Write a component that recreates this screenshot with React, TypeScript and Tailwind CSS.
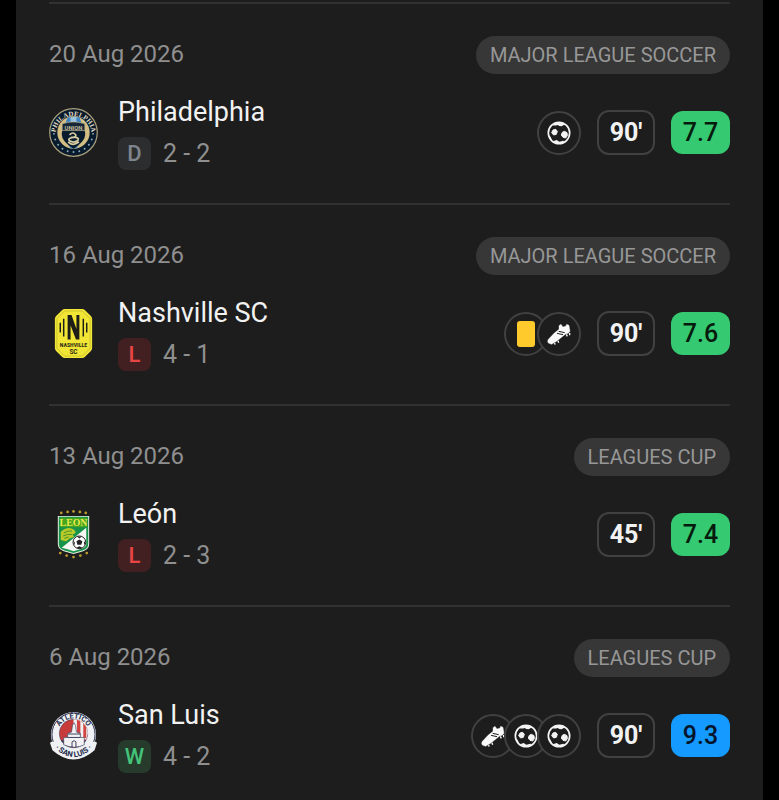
import type { ReactNode } from "react";

type Result = "W" | "D" | "L";
type EventKind = "goal" | "assist" | "yellow";

type Match = {
  date: string;
  league: string;
  team: string;
  crest: ReactNode;
  result: Result;
  score: string;
  events: EventKind[];
  minutes: string;
  rating: string;
  ratingClass: string;
};

const crestClass = "size-[49px] shrink-0";

function PhiladelphiaCrest() {
  const stars = Array.from({ length: 11 }, (_, i) => {
    const a = ((4 + i * 17.2) * Math.PI) / 180;
    return { x: 50 + 40 * Math.cos(a), y: 50 + 40 * Math.sin(a) };
  });
  return (
    <svg viewBox="0 0 100 100" className={crestClass} role="img" aria-label="Philadelphia crest">
      <defs>
        <path id="phi-arc" d="M13.5 53A36.5 36.5 0 0 1 86.5 53" />
      </defs>
      <circle cx="50" cy="50" r="48.5" fill="#071b2c" stroke="#a99f7c" strokeWidth="2.5" />
      <circle cx="50" cy="50" r="33" fill="#d2bd83" />
      <path d="M38 19h24l7 19H31zM33 66h34L56 82H44z" fill="#4084c4" />
      <path d="M44 18h12v14H44z" fill="#9cc3dd" />
      <path d="M27 33q23-9 46 0v14q6 18-23 36Q21 65 27 47z" fill="#071b2c" />
      <path d="M27 32q23-7 46 0v14H27z" fill="#152637" stroke="#b9b08c" strokeWidth="1.5" />
      <path d="M43 54q6-6 11 0 3 5-5 6-12 2-7 7 8 5 16 0 5-5-3-7H46M40 70q9 8 20 0" fill="none" stroke="#d8cda4" strokeWidth="3.5" strokeLinecap="round" />
      <text x="50" y="44" textAnchor="middle" fontFamily="Roboto, sans-serif" fontWeight="700" fontSize="12" fill="#c3bb9c">UNION</text>
      <text fontFamily="'Liberation Serif', serif" fontWeight="700" fontSize="14" fill="#e2ddc8">
        <textPath href="#phi-arc" startOffset="50%" textAnchor="middle">PHILADELPHIA</textPath>
      </text>
      {stars.map((s, i) => (
        <circle key={i} cx={s.x} cy={s.y} r="2" fill="#8ba7b8" />
      ))}
    </svg>
  );
}

function NashvilleCrest() {
  return (
    <svg viewBox="0 0 100 100" className={crestClass} role="img" aria-label="Nashville SC crest">
      <path d="M32 0h36q3 0 5 2l12 12q3 3 3 6v60q0 3-3 6L73 98q-2 2-5 2H32q-3 0-5-2L15 86q-3-3-3-6V20q0-3 3-6L27 2q2-2 5-2z" fill="#f1e536" />
      <path d="M32 4h36l16 16v60L68 96H32L16 80V20z" fill="none" stroke="#c2b92c" strokeWidth="1.5" />
      <path d="M38 12h8l10 29V12h6v50h-7L44 33v29h-6z" fill="#1e1e18" />
      <path d="M23 28v20M30 20v36M70 20v36M77 28v20" stroke="#1e1e18" strokeWidth="3" />
      <text x="50" y="77" textAnchor="middle" fontFamily="'Liberation Sans Narrow', 'Roboto Condensed', Roboto, sans-serif" fontWeight="700" fontSize="12" fill="#2b2913">NASHVILLE</text>
      <text x="50" y="91" textAnchor="middle" fontFamily="Roboto, sans-serif" fontWeight="700" fontSize="13" fill="#2b2913">SC</text>
    </svg>
  );
}

function LeonCrest() {
  return (
    <svg viewBox="0 0 100 100" className={crestClass} role="img" aria-label="León crest">
      <path d="M18 12h64v58q0 13-19 16l-13 4-13-4q-19-3-19-16z" fill="#e8eee0" />
      <path d="M20 14h60v56q0 11-18 14l-12 4-12-4q-18-3-18-14z" fill="#18934a" />
      <path d="M76 36v34q0 8-16 11l-10 3-12-4-12-3z" fill="#f5f7f3" />
      <path d="M23 16h54v19H23z" fill="#47a51e" />
      <path d="M24 45q8-9 20-8 11 3 10 10l-6 3 3 5-9 3-7 6-11-3z" fill="#b9cb28" />
      <path d="M30 47q9-6 17-4M29 53q9-5 18-3M31 58l9-3" fill="none" stroke="#4b9126" strokeWidth="2" />
      <text x="50" y="33" textAnchor="middle" fontFamily="'Liberation Serif', serif" fontWeight="700" fontSize="20" fill="#e7eb51">LEON</text>
      <circle cx="62" cy="66" r="13" fill="#fff" stroke="#222" strokeWidth="2" />
      <path d="M62 60l6 4-2 7h-8l-2-7zM57 54h10l-5 4zM50 63l3 4-2 6zM74 63l-3 4 2 6zM56 77l6-3 6 3-6 2z" fill="#222" />
      <g fill="#b99b2c">
        <circle cx="25" cy="6" r="2.8" /><circle cx="38" cy="4" r="2.8" /><circle cx="50" cy="3" r="2.8" /><circle cx="63" cy="4" r="2.8" /><circle cx="75" cy="6" r="2.8" />
        <circle cx="23" cy="88" r="2.8" /><circle cx="36" cy="93" r="2.8" /><circle cx="50" cy="96" r="2.8" /><circle cx="64" cy="93" r="2.8" /><circle cx="77" cy="88" r="2.8" />
      </g>
    </svg>
  );
}

function SanLuisCrest() {
  return (
    <svg viewBox="0 0 100 100" className={crestClass} role="img" aria-label="San Luis crest">
      <defs>
        <path id="slp-top" d="M18 47A32 32 0 0 1 82 47" />
        <path id="slp-bottom" d="M4 68Q50 120 96 68" />
      </defs>
      <circle cx="50" cy="48" r="46" fill="#f0f1f4" />
      <path d="M2 65l12-8q36 35 72 0l12 8-5 15q-43 38-86 0z" fill="#f0f1f4" />
      <circle cx="50" cy="48" r="44" fill="none" stroke="#232b4c" strokeWidth="2" />
      <path d="M4 66l11-7q35 34 70 0l11 7-5 13q-41 35-82 0z" fill="#f0f1f4" />
      <circle cx="50" cy="46" r="29" fill="#c83b3b" stroke="#39415e" strokeWidth="1" />
      <path d="M50 17a29 29 0 0 1 29 29l-3 12H50z" fill="#f0f1f4" />
      <path d="M57 18l7 3v32h-7zM70 25l6 8v22h-6z" fill="#d34341" />
      <path d="M24 60q26 28 52 0z" fill="#253054" />
      <path d="M30 69V54h8v-8l8-3 2-14 3-5 3 5 2 14 8 3v8h8v15q-20 10-42 0z" fill="#f4f2f4" stroke="#36405d" strokeWidth="1.3" />
      <path d="M47 74V63q4-5 8 0v11M38 54h26M39 47h25" fill="none" stroke="#36405d" strokeWidth="2" />
      <text fontFamily="Roboto, sans-serif" fontWeight="700" fontSize="15" fill="#232b4c">
        <textPath href="#slp-top" startOffset="50%" textAnchor="middle">ATLÉTICO</textPath>
      </text>
      <text fontFamily="Roboto, sans-serif" fontWeight="700" fontSize="16" fill="#232b4c">
        <textPath href="#slp-bottom" startOffset="50%" textAnchor="middle">· SAN LUIS ·</textPath>
      </text>
    </svg>
  );
}

function GoalIcon() {
  return (
    <svg viewBox="0 0 72 72" className="size-6" aria-hidden="true">
      <circle cx="36" cy="36" r="32" fill="#1d1d1d" stroke="#f4f4f4" strokeWidth="5" />
      <path d="M20 9q10-7 22-4l12 5-10 6q-8 0-12-4-8 3-14 1zM20 60l9-3 8 5 12-3 4 5q-17 10-33-1zM4 44l5 1 6 11-4 2z" fill="#f4f4f4" />
      <path d="M18 27l8-2 5 6-3 9-8 2-6-7zM46 34l6-3 8 4 1 9-5 7-8-2-5-7z" fill="#f4f4f4" stroke="#f4f4f4" strokeWidth="3" strokeLinejoin="round" />
    </svg>
  );
}

function AssistIcon() {
  return (
    <svg viewBox="0 0 72 66" className="w-6" aria-hidden="true">
      <path d="M3 50L21 31 36 19 36 8 42 4 48 12 57 9 59 4 66 7 69 25 64 31 56 33 30 54 14 64 5 61Q0 57 3 50z" fill="#fafafa" stroke="#fafafa" strokeWidth="1" strokeLinejoin="round" />
      <path d="M30 31l18 4M35 25l18 4" stroke="#1d1d1d" strokeWidth="3" />
      <path d="M68 30v7M58 34l3 6M33 53l2 6M23 60l1 5" stroke="#fafafa" strokeWidth="4" />
    </svg>
  );
}

const eventLabels: Record<EventKind, string> = {
  goal: "Goal",
  assist: "Assist",
  yellow: "Yellow card",
};

function EventBadge({ kind }: { kind: EventKind }) {
  return (
    <li
      aria-label={eventLabels[kind]}
      className="-mr-[11px] flex size-11 items-center justify-center rounded-full border-2 border-[#414141] bg-[#1d1d1d] first:mr-0"
    >
      {kind === "goal" && <GoalIcon />}
      {kind === "assist" && <AssistIcon />}
      {kind === "yellow" && <span className="h-[26px] w-[18px] rounded-[3px] bg-[#ffca2c]" />}
    </li>
  );
}

const resultClasses: Record<Result, string> = {
  W: "bg-[#263b2c] text-[#43c478]",
  D: "bg-[#2c2d2f] text-[#7f858d]",
  L: "bg-[#422021] text-[#e84545]",
};

const matches: Match[] = [
  { date: "20 Aug 2026", league: "MAJOR LEAGUE SOCCER", team: "Philadelphia", crest: <PhiladelphiaCrest />, result: "D", score: "2 - 2", events: ["goal"], minutes: "90'", rating: "7.7", ratingClass: "bg-[#35c971] text-[#061a0d]" },
  { date: "16 Aug 2026", league: "MAJOR LEAGUE SOCCER", team: "Nashville SC", crest: <NashvilleCrest />, result: "L", score: "4 - 1", events: ["yellow", "assist"], minutes: "90'", rating: "7.6", ratingClass: "bg-[#35c971] text-[#061a0d]" },
  { date: "13 Aug 2026", league: "LEAGUES CUP", team: "León", crest: <LeonCrest />, result: "L", score: "2 - 3", events: [], minutes: "45'", rating: "7.4", ratingClass: "bg-[#35c971] text-[#061a0d]" },
  { date: "6 Aug 2026", league: "LEAGUES CUP", team: "San Luis", crest: <SanLuisCrest />, result: "W", score: "4 - 2", events: ["assist", "goal", "goal"], minutes: "90'", rating: "9.3", ratingClass: "bg-[#159bff] text-[#04152b]" },
];

function MatchRow({ match }: { match: Match }) {
  return (
    <li className="border-t-2 border-[#313131] pt-8 pb-[33px]">
      <div className="flex items-start justify-between">
        <time className="text-[24px] leading-[36px] text-[#8f8f8f]">{match.date}</time>
        <span className="flex h-[38px] items-center rounded-full bg-[#373737] px-[14px] text-[20px] text-[#979797]">
          {match.league}
        </span>
      </div>
      <div className="mt-[21px] flex items-center justify-between">
        <div className="flex items-center gap-5">
          {match.crest}
          <div>
            <h2 className="text-[27px] leading-[34px] text-[#f2f2f2]">{match.team}</h2>
            <div className="mt-2 flex items-center gap-3">
              <span className={`flex size-[33px] items-center justify-center rounded-lg text-[22px] font-medium ${resultClasses[match.result]}`}>
                {match.result}
              </span>
              <span className="text-[25px] leading-8 text-[#8f8f8f]">{match.score}</span>
            </div>
          </div>
        </div>
        <div className="flex items-center gap-4">
          {match.events.length > 0 && (
            <ul className="flex flex-row-reverse">
              {[...match.events].reverse().map((kind, i) => (
                <EventBadge key={i} kind={kind} />
              ))}
            </ul>
          )}
          <span className="flex h-[45px] w-[58px] items-center justify-center rounded-xl border-2 border-[#414141] text-[25px] font-bold text-[#f2f2f2]">
            {match.minutes}
          </span>
          <span className={`flex h-[43px] w-[59px] items-center justify-center rounded-xl text-[25px] font-medium ${match.ratingClass}`}>
            {match.rating}
          </span>
        </div>
      </div>
    </li>
  );
}

export default function App() {
  return (
    <main className="min-h-screen bg-black px-4 font-[Roboto,sans-serif]">
      <ul className="min-h-screen bg-[#1d1d1d] px-[33px] pt-0.5">
        {matches.map((match) => (
          <MatchRow key={match.date} match={match} />
        ))}
      </ul>
    </main>
  );
}
